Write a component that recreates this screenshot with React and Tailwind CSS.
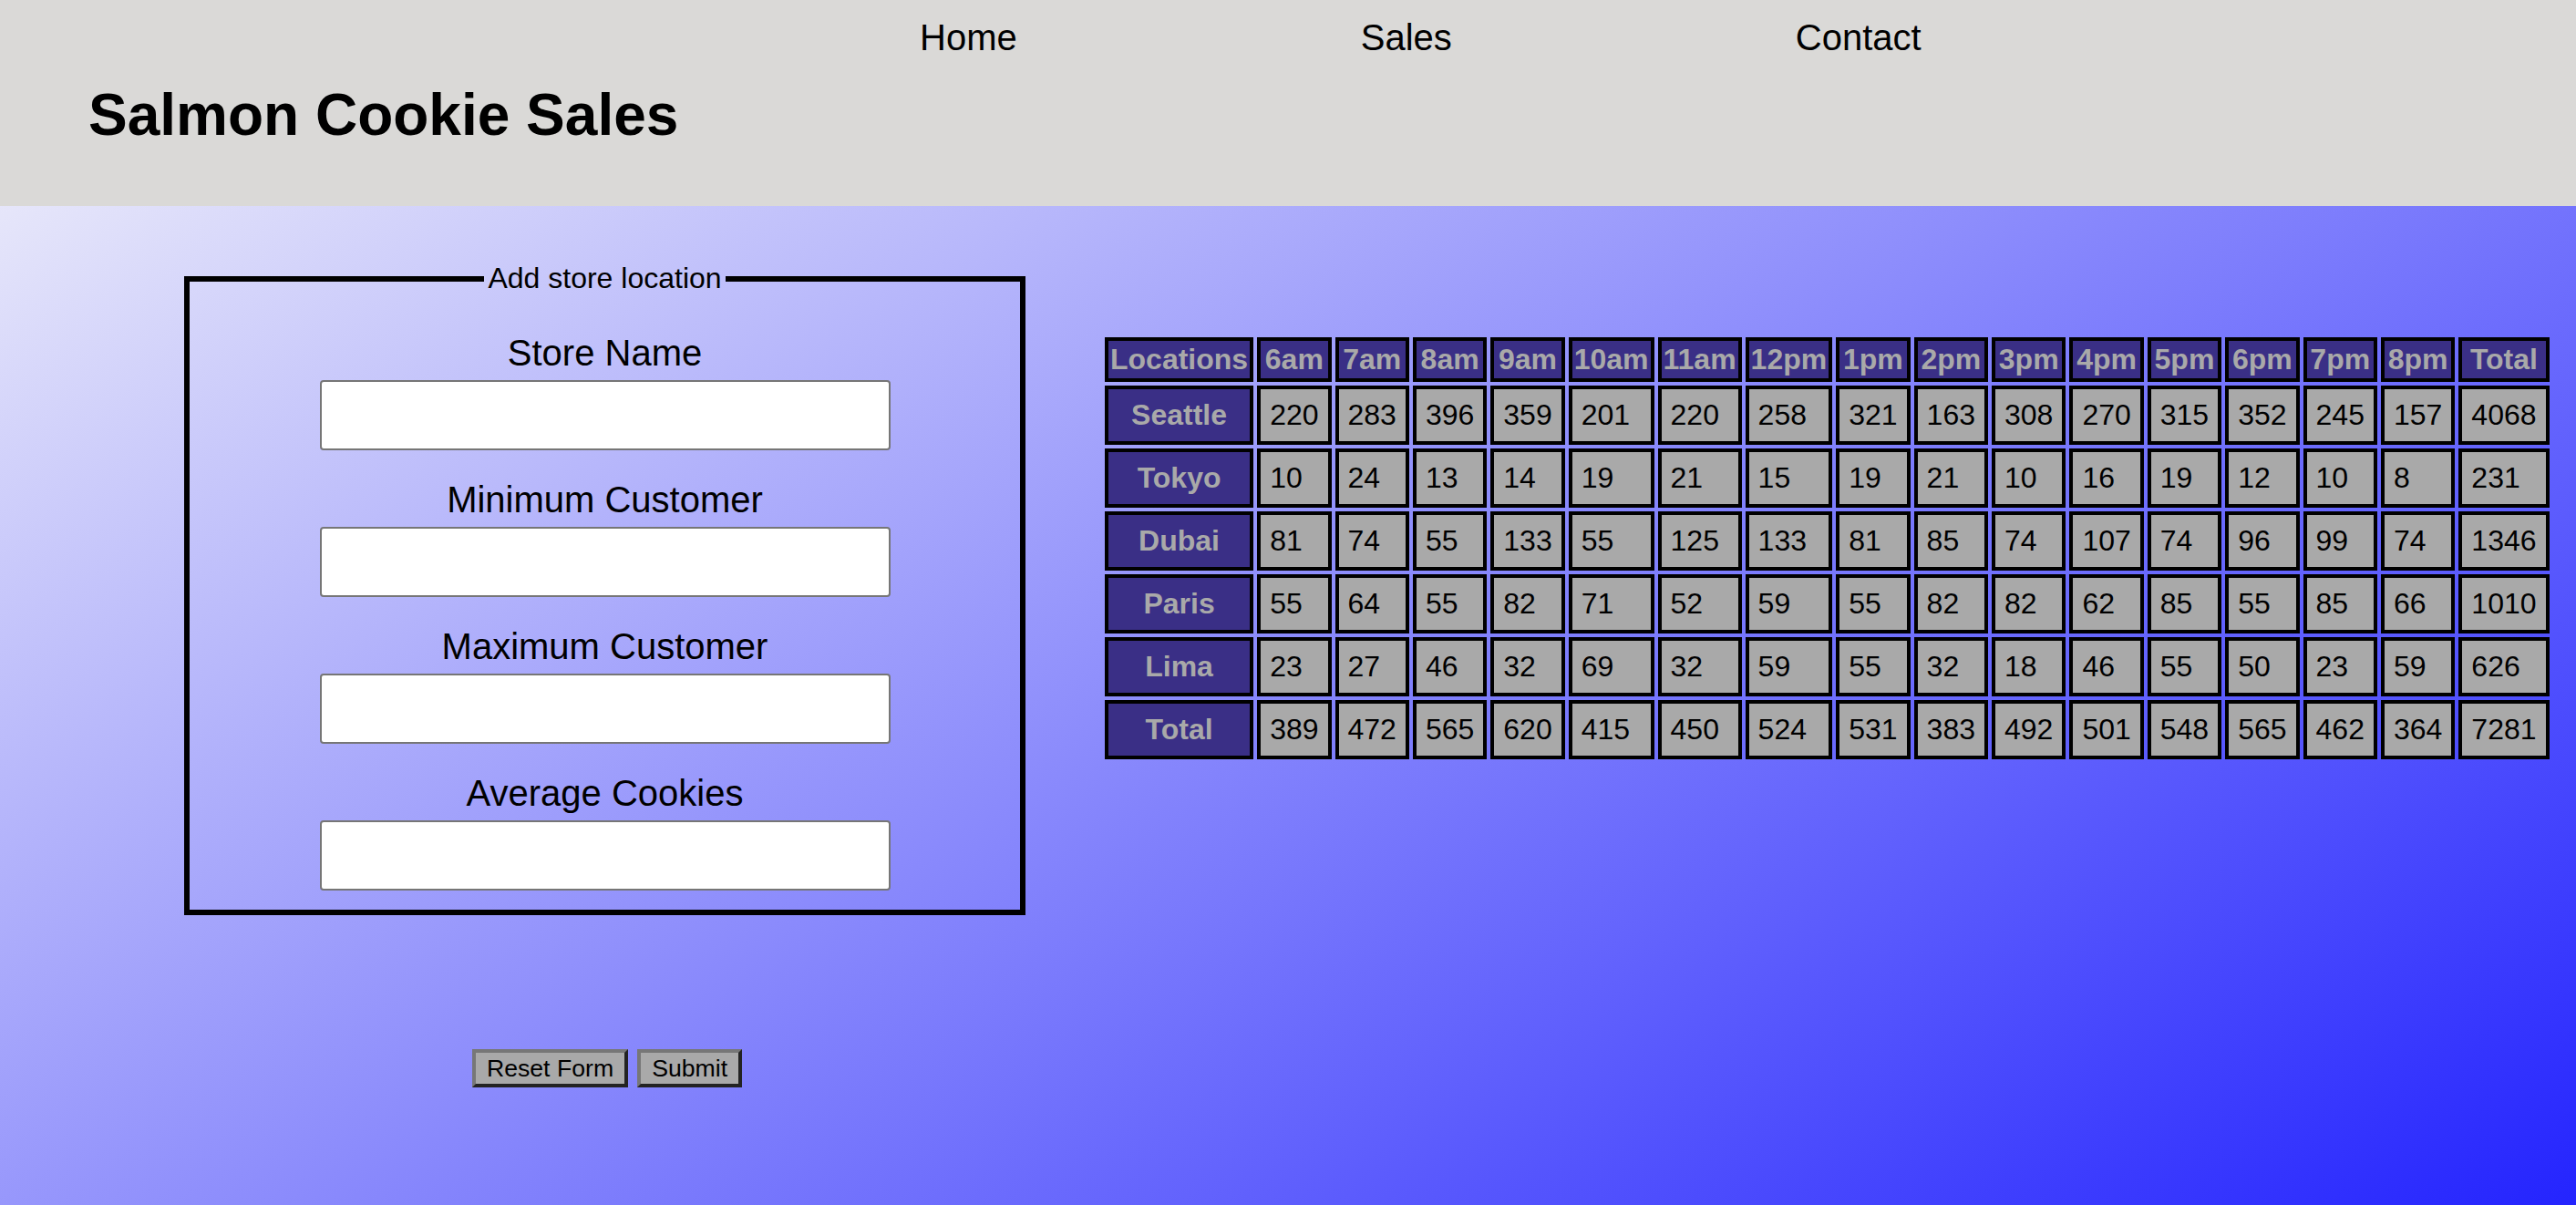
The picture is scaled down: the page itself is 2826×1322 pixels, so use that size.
import React from "react";

const hours = ["6am", "7am", "8am", "9am", "10am", "11am", "12pm", "1pm", "2pm", "3pm", "4pm", "5pm", "6pm", "7pm", "8pm"];

const stores = [
  { name: "Seattle", sales: [220, 283, 396, 359, 201, 220, 258, 321, 163, 308, 270, 315, 352, 245, 157], total: 4068 },
  { name: "Tokyo", sales: [10, 24, 13, 14, 19, 21, 15, 19, 21, 10, 16, 19, 12, 10, 8], total: 231 },
  { name: "Dubai", sales: [81, 74, 55, 133, 55, 125, 133, 81, 85, 74, 107, 74, 96, 99, 74], total: 1346 },
  { name: "Paris", sales: [55, 64, 55, 82, 71, 52, 59, 55, 82, 82, 62, 85, 55, 85, 66], total: 1010 },
  { name: "Lima", sales: [23, 27, 46, 32, 69, 32, 59, 55, 32, 18, 46, 55, 50, 23, 59], total: 626 },
];

const totals = [389, 472, 565, 620, 415, 450, 524, 531, 383, 492, 501, 548, 565, 462, 364];

const thClass = "border-4 border-black bg-[#3a2f86] text-[#a9a9a9] font-bold px-[2px] py-[2px] text-center leading-[37px]";
const tdClass = "border-4 border-black bg-[#a9a9a9] text-black p-[10px] text-left leading-[37px]";

const fields = ["Store Name", "Minimum Customer", "Maximum Customer", "Average Cookies"];

const App = () => {
  return (
    <div className="w-[2826px] font-['Liberation_Sans',Arial,sans-serif] text-black">
      {/* header */}
      <header className="h-[226px] bg-[#dad9d7] pt-[18px]">
        <ul className="flex gap-[377px] pl-[1009px] text-[40px] leading-[46px]">
          <li>Home</li>
          <li>Sales</li>
          <li>Contact</li>
        </ul>
        <h1 className="mt-[25px] pl-[97px] text-[64px] leading-[74px] font-bold">Salmon Cookie Sales</h1>
      </header>

      {/* page body is taller than the window, gradient runs past the bottom */}
      <main className="flex items-start min-h-[1096px] bg-[#0000ff] bg-no-repeat bg-[length:100%_1600px] bg-[linear-gradient(to_bottom_right,#e6e6fa,#0000ff)]">
        {/* form */}
        <form className="pl-[202px] pt-[61px]">
          <fieldset className="w-[923px] border-[6px] border-black pt-[40px] pb-[21px]">
            <legend className="mx-auto px-[4px] text-[32px] leading-[37px]">Add store location</legend>
            <div className="flex flex-col items-center gap-[31px]">
              {fields.map((f) => (
                <div key={f} className="flex flex-col items-center">
                  <label className="text-[40px] leading-[46px] mb-[7px]">{f}</label>
                  <input type="text" className="w-[626px] h-[77px] bg-white border-2 border-[#767676] rounded-[4px]" />
                </div>
              ))}
            </div>
          </fieldset>
          <div className="w-[923px] flex justify-center gap-[10px] mt-[147px] pl-[5px]">
            <button type="reset" className="bg-[#a9a9a9] border-4 border-t-[#777777] border-l-[#777777] border-b-[#232323] border-r-[#232323] px-[12px] py-[2px] text-[26.67px] leading-[30px]">
              Reset Form
            </button>
            <button type="submit" className="bg-[#a9a9a9] border-4 border-t-[#777777] border-l-[#777777] border-b-[#232323] border-r-[#232323] px-[12px] py-[2px] text-[26.67px] leading-[30px]">
              Submit
            </button>
          </div>
        </form>

        {/* sales table */}
        <table className="ml-[83px] mt-[140px] border-separate border-spacing-[4px] text-[32px]">
          <thead>
            <tr>
              <th className={thClass}>Locations</th>
              {hours.map((h) => (
                <th key={h} className={thClass}>{h}</th>
              ))}
              <th className={thClass}>Total</th>
            </tr>
          </thead>
          <tbody>
            {stores.map((s) => (
              <tr key={s.name}>
                <th className={thClass}>{s.name}</th>
                {s.sales.map((n, i) => (
                  <td key={i} className={tdClass}>{n}</td>
                ))}
                <td className={tdClass}>{s.total}</td>
              </tr>
            ))}
            <tr>
              <th className={thClass}>Total</th>
              {totals.map((n, i) => (
                <td key={i} className={tdClass}>{n}</td>
              ))}
              <td className={tdClass}>7281</td>
            </tr>
          </tbody>
        </table>
      </main>
    </div>
  );
};

export default App;
